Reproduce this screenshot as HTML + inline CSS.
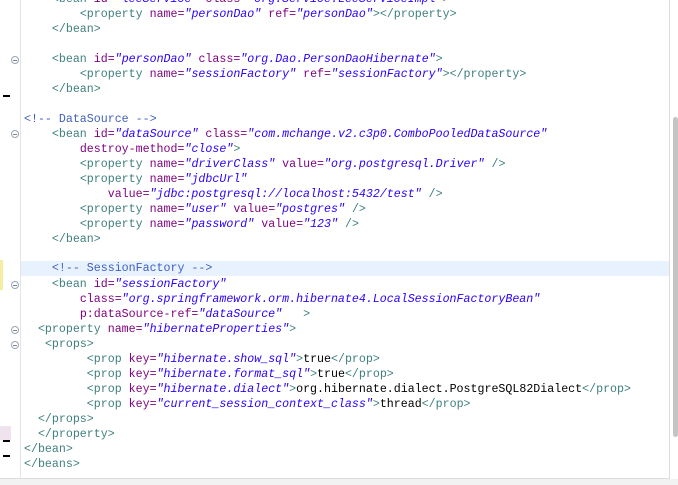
<!DOCTYPE html>
<html><head><style>
body{margin:0;width:678px;height:485px;overflow:hidden;background:#fff;position:relative;font-family:"Liberation Mono",monospace;}
.ed{position:absolute;left:0;top:0;width:669px;height:478px;background:#fff;border-right:1px solid #ddd;border-bottom:1px solid #ddd;}
.gut{position:absolute;left:20px;top:0;width:1px;height:478px;background:#e4e4e4;}
.bot{position:absolute;left:0;top:479px;width:678px;height:6px;background:#f2f2f2;}
.l{position:absolute;left:24px;height:15px;line-height:15px;font-size:11.63px;white-space:pre;color:#000;margin-top:1px;}
.t{color:#3f7f7f}.a{color:#7f007f}.v{color:#2a00ff;font-style:italic}.c{color:#3f5fbf}
.hl{position:absolute;left:21px;top:261px;width:648px;height:15px;background:#e8f2fe;}
.f{position:absolute;left:11px;width:8px;height:8px;border:1px solid #9aa4b4;border-radius:50%;box-sizing:border-box;margin-top:1px;}
.f::after{content:"";position:absolute;left:1px;top:3px;width:4px;height:1px;background:#7a8494;}
.m{position:absolute;left:3px;width:7px;height:2px;background:#000;}
.sb{position:absolute;left:673px;top:117px;width:5px;height:320px;background:#c4c4c4;border-radius:3px;}
</style></head><body>
<div class="ed"></div>
<div class="hl"></div>
<div class="gut"></div>
<div class="bot"></div>
<div class="sb"></div>
<div style="position:absolute;left:0;top:260px;width:3px;height:30px;background:#f5eea0"></div>
<div style="position:absolute;left:0;top:426px;width:11px;height:14px;background:#efe3ef"></div>
<div class="m" style="top:95px"></div>
<div class="m" style="top:440px"></div>
<div class="m" style="top:455px"></div>
<div class="f" style="top:55px"></div>
<div class="f" style="top:129px"></div>
<div class="f" style="top:280px"></div>
<div class="f" style="top:325px"></div>
<div class="f" style="top:340px"></div>
<div class="l" style="top:-9px">    <span class="t">&lt;bean</span> <span class="a">id=</span><span class="v">"leeService"</span> <span class="a">class=</span><span class="v">"org.Service.LeeServiceImpl"</span><span class="t">&gt;</span></div>
<div class="l" style="top:6px">        <span class="t">&lt;property</span> <span class="a">name=</span><span class="v">"personDao"</span> <span class="a">ref=</span><span class="v">"personDao"</span><span class="t">&gt;&lt;/property&gt;</span></div>
<div class="l" style="top:21px">    <span class="t">&lt;/bean&gt;</span></div>
<div class="l" style="top:51px">    <span class="t">&lt;bean</span> <span class="a">id=</span><span class="v">"personDao"</span> <span class="a">class=</span><span class="v">"org.Dao.PersonDaoHibernate"</span><span class="t">&gt;</span></div>
<div class="l" style="top:66px">        <span class="t">&lt;property</span> <span class="a">name=</span><span class="v">"sessionFactory"</span> <span class="a">ref=</span><span class="v">"sessionFactory"</span><span class="t">&gt;&lt;/property&gt;</span></div>
<div class="l" style="top:81px">    <span class="t">&lt;/bean&gt;</span></div>
<div class="l" style="top:111px"><span class="c">&lt;!-- DataSource --&gt;</span></div>
<div class="l" style="top:126px">    <span class="t">&lt;bean</span> <span class="a">id=</span><span class="v">"dataSource"</span> <span class="a">class=</span><span class="v">"com.mchange.v2.c3p0.ComboPooledDataSource"</span></div>
<div class="l" style="top:141px">        <span class="a">destroy-method=</span><span class="v">"close"</span><span class="t">&gt;</span></div>
<div class="l" style="top:156px">        <span class="t">&lt;property</span> <span class="a">name=</span><span class="v">"driverClass"</span> <span class="a">value=</span><span class="v">"org.postgresql.Driver"</span> <span class="t">/&gt;</span></div>
<div class="l" style="top:171px">        <span class="t">&lt;property</span> <span class="a">name=</span><span class="v">"jdbcUrl"</span></div>
<div class="l" style="top:186px">            <span class="a">value=</span><span class="v">"jdbc:postgresql://localhost:5432/test"</span> <span class="t">/&gt;</span></div>
<div class="l" style="top:201px">        <span class="t">&lt;property</span> <span class="a">name=</span><span class="v">"user"</span> <span class="a">value=</span><span class="v">"postgres"</span> <span class="t">/&gt;</span></div>
<div class="l" style="top:216px">        <span class="t">&lt;property</span> <span class="a">name=</span><span class="v">"password"</span> <span class="a">value=</span><span class="v">"123"</span> <span class="t">/&gt;</span></div>
<div class="l" style="top:231px">    <span class="t">&lt;/bean&gt;</span></div>
<div class="l" style="top:260px">    <span class="c">&lt;!-- SessionFactory --&gt;</span></div>
<div class="l" style="top:276px">    <span class="t">&lt;bean</span> <span class="a">id=</span><span class="v">"sessionFactory"</span></div>
<div class="l" style="top:291px">        <span class="a">class=</span><span class="v">"org.springframework.orm.hibernate4.LocalSessionFactoryBean"</span></div>
<div class="l" style="top:306px">        <span class="a">p:dataSource-ref=</span><span class="v">"dataSource"</span>   <span class="t">&gt;</span></div>
<div class="l" style="top:321px">  <span class="t">&lt;property</span> <span class="a">name=</span><span class="v">"hibernateProperties"</span><span class="t">&gt;</span></div>
<div class="l" style="top:336px">   <span class="t">&lt;props&gt;</span></div>
<div class="l" style="top:351px">         <span class="t">&lt;prop</span> <span class="a">key=</span><span class="v">"hibernate.show_sql"</span><span class="t">&gt;</span>true<span class="t">&lt;/prop&gt;</span></div>
<div class="l" style="top:366px">         <span class="t">&lt;prop</span> <span class="a">key=</span><span class="v">"hibernate.format_sql"</span><span class="t">&gt;</span>true<span class="t">&lt;/prop&gt;</span></div>
<div class="l" style="top:381px">         <span class="t">&lt;prop</span> <span class="a">key=</span><span class="v">"hibernate.dialect"</span><span class="t">&gt;</span>org.hibernate.dialect.PostgreSQL82Dialect<span class="t">&lt;/prop&gt;</span></div>
<div class="l" style="top:396px">         <span class="t">&lt;prop</span> <span class="a">key=</span><span class="v">"current_session_context_class"</span><span class="t">&gt;</span>thread<span class="t">&lt;/prop&gt;</span></div>
<div class="l" style="top:411px">  <span class="t">&lt;/props&gt;</span></div>
<div class="l" style="top:426px">  <span class="t">&lt;/property&gt;</span></div>
<div class="l" style="top:441px"><span class="t">&lt;/bean&gt;</span></div>
<div class="l" style="top:456px"><span class="t">&lt;/beans&gt;</span></div>
</body></html>
